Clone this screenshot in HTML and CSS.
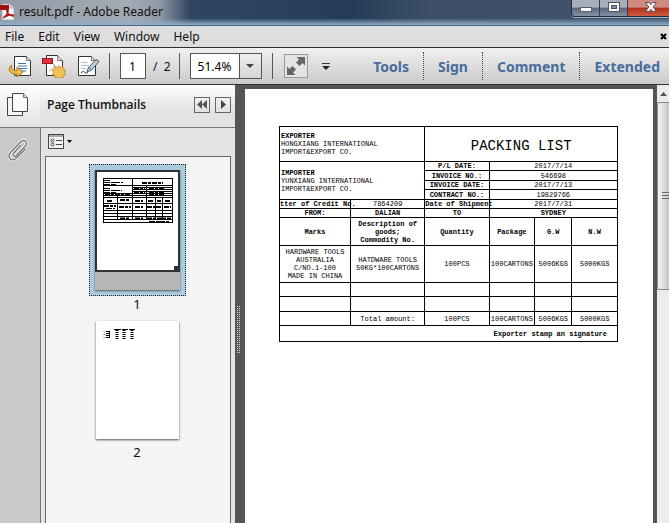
FILE: index.html
```html
<!DOCTYPE html>
<html lang="en">
<head>
<meta charset="utf-8">
<title>result.pdf - Adobe Reader</title>
<link rel="stylesheet" href="styles.css">
</head>
<body>
<div class="app">
  <header class="titlebar">
    <svg class="app-icon" width="16" height="17" viewBox="0 0 16 17"><path d="M2 1h8l4 4v12H2z" fill="#f4f4f4" stroke="#999" stroke-width=".6"/><path d="M10 1v4h4" fill="#ddd" stroke="#999" stroke-width=".6"/><rect y="2" width="9" height="5" fill="#a50f14"/><path d="M3 15c3-2 5-5 5-7s-2-1-1 1 4 4 6 4-1-2-4-1-5 2-6 3z" fill="none" stroke="#b3161b" stroke-width="1.5"/></svg>
    <span class="title">result.pdf - Adobe Reader</span>
    <div class="controls">
      <button class="win" aria-label="Minimize"><svg width="12" height="10" viewBox="0 0 12 10"><rect x=".5" y="5.500" width="11" height="4" fill="#fff" stroke="#555c6b"/></svg></button>
      <button class="win" aria-label="Maximize"><svg width="12" height="10" viewBox="0 0 12 10"><rect x=".5" y=".5" width="11" height="9" fill="#fff" stroke="#4b5364"/><rect x="3.500" y="3.500" width="5" height="3" fill="#8591a8" stroke="#4b5364"/></svg></button>
      <button class="win close" aria-label="Close"><svg width="12" height="10" viewBox="0 0 12 10"><path d="M.5.5h3.700L6 2.600 7.800.5h3.700L8.200 5l3.300 4.500H7.800L6 7.400 4.200 9.500H.5L3.800 5z" fill="#fff" stroke="#5b4650"/></svg></button>
    </div>
  </header>

  <nav class="menubar">
    <button>File</button><button>Edit</button><button>View</button><button>Window</button><button>Help</button>
    <button class="doc-close" aria-label="Close document"><svg width="7" height="7" viewBox="0 0 7 7"><path d="M1 1l5 5M6 1L1 6" stroke="#000" stroke-width="2.200"/></svg></button>
  </nav>

  <div class="toolbar">
    <button class="tool" aria-label="Open"><svg width="24" height="24" viewBox="0 0 24 24"><path d="M6.500 2.500h12l4 4v15h-16z" fill="#fff" stroke="#333"/><path d="M18.500 2.500v4h4" fill="#ddd" stroke="#777"/><path d="M10 9.500h8M10 12h9M10 14.500h9M12 17h6" stroke="#3a78b8"/><path d="M3.500 11C-1 15 1.500 20.500 9 20v3l6-5-6-5v3.500c-4 .5-6-1.500-5.500-5.500z" fill="#f2bd4c" stroke="#a87318"/></svg></button>
    <button class="tool" aria-label="Create PDF"><svg width="24" height="24" viewBox="0 0 24 24"><path d="M4.500 1.500h11l5 5v15h-16z" fill="#fff" stroke="#333"/><path d="M15.500 1.500v5h5" fill="#ddd" stroke="#777"/><path d="M7 17c5-2 6-6 5-7s-1 3 6 5" fill="none" stroke="#aaa"/><rect x=".5" y="4.500" width="10" height="5" fill="#e0343c" stroke="#a4161d"/><path d="M17 11.500l1.500 2 2.500-.8.300 2.600 2.400.9-1.200 2.300 1.200 2.200-2.400.9-.3 2.300-2.500-.6-1.500 1.500-1.500-1.500-2.500.6-.3-2.300-2.400-.9 1.200-2.200-1.200-2.300 2.400-.9.300-2.600 2.500.8z" fill="#f3c054" stroke="#bd8526" stroke-width=".8"/></svg></button>
    <button class="tool" aria-label="Sign document"><svg width="24" height="24" viewBox="0 0 24 24"><path d="M2.500 2.500h13l4 4v15h-17z" fill="#fff" stroke="#333"/><path d="M15.500 2.500v4h4" fill="#ddd" stroke="#777"/><path d="M5 8.500h7M5 11.500h8M5 14.500h5" stroke="#bbb"/><path d="M5 19c4-5 3 3 7-1" fill="none" stroke="#333"/><path d="M11 18l1.500-4.500L20 5.500l3 2-7.500 8.500z" fill="#b7d0e4" stroke="#3f5568"/><path d="M13.500 13.500l2 2" stroke="#3f5568"/></svg></button>
    <span class="rule"></span>
    <input class="page-input" type="text" value="1" aria-label="Page number">
    <span class="page-total">/&nbsp; 2</span>
    <span class="rule"></span>
    <div class="zoom-box">
      <input type="text" value="51.4%" aria-label="Zoom level">
      <button aria-label="Zoom presets"><svg width="8" height="4" viewBox="0 0 8 4"><path d="M0 0h8L4 4z" fill="#444"/></svg></button>
    </div>
    <span class="rule"></span>
    <button class="fit" aria-label="Read mode"><svg width="20" height="20" viewBox="0 0 20 20"><path d="M10.500 1H19v8.500L16.500 7l-3 3L10 6.500l3-3zM9.500 19H1v-8.500L3.500 13l3-3L10 13.500l-3 3z" fill="#666"/></svg></button>
    <button class="more" aria-label="More tools"><svg width="8" height="7" viewBox="0 0 8 7"><path d="M0 .5h8" stroke="#333"/><path d="M0 3h8L4 7z" fill="#222"/></svg></button>
    <div class="panes"><button>Tools</button><button>Sign</button><button>Comment</button><button>Extended</button></div>
  </div>

  <main class="body">
    <aside class="strip">
      <button class="strip-tab active" aria-label="Page thumbnails"><svg width="22" height="24" viewBox="0 0 22 24"><path d="M.5 4.500h15v18H.5z" fill="#f4f4f4" stroke="#444"/><path d="M5.500.5h11l4 4v14h-15z" fill="#fafafa" stroke="#444"/><path d="M16.500.5v4h4" fill="#ddd" stroke="#777"/></svg></button>
      <button class="strip-tab" aria-label="Attachments"><svg width="22" height="24" viewBox="0 0 22 24"><path d="M14 7l-7.500 8.500c-1.500 2 1 4 2.700 2.300L18 8.500C22 4 17 .5 13.500 4L4 14c-5 5.500 1 10.500 6 5.500L18.500 11" fill="none" stroke="#f5f5f5" stroke-width="3"/><path d="M14 7l-7.500 8.500c-1.500 2 1 4 2.700 2.300L18 8.500C22 4 17 .5 13.500 4L4 14c-5 5.500 1 10.500 6 5.500L18.500 11" fill="none" stroke="#777" stroke-width="1.400"/></svg></button>
    </aside>

    <section class="panel">
      <div class="panel-head">
        <h2>Page Thumbnails</h2>
        <button class="mini" aria-label="Collapse"><svg width="10" height="9" viewBox="0 0 10 9"><path d="M5 0v9L0 4.500zM10 0v9L5 4.500z" fill="#555"/></svg></button>
        <button class="mini" aria-label="Expand"><svg width="5" height="9" viewBox="0 0 5 9"><path d="M0 0v9l5-4.500z" fill="#444"/></svg></button>
      </div>
      <div class="panel-body">
        <button class="options" aria-label="Options"><svg width="25" height="16" viewBox="0 0 25 16"><rect x=".5" y=".5" width="15" height="14" fill="#f2f2f2" stroke="#444"/><path d="M1 2h14" stroke="#aaa" stroke-width="2"/><circle cx="4.500" cy="6.500" r="1.500" fill="none" stroke="#444"/><circle cx="4.500" cy="10.500" r="1.500" fill="none" stroke="#444"/><path d="M8 6.500h6M8 10.500h6" stroke="#444"/><path d="M19 6h5l-2.500 3z"/></svg></button>
        <div class="thumbs">
          <figure>
            <div class="select">
              <div class="thumb">
                <svg class="view" width="85" height="102" viewBox="0 0 85 102">
                  <rect x="1" y="1" width="83" height="100" fill="#fff" stroke="#303236" stroke-width="2"/>
                  <g fill="none" stroke="#000">
                    <rect x="8.500" y="8.500" width="69" height="44"/>
                    <path d="M8 15.500h29M37 15.500h41M37 17.500h41M37 19.500h41M37 21.500h41M8 23.500h70M8 25.500h70M8 27.500h70M8 33.500h70M8 40.500h70M8 43.500h70M8 46.500h70M8 49.500h70M37.500 8v42M51.500 16v34M60.500 27v23M67.500 27v23M22.500 23v27"/>
                    <path stroke-width="2" stroke-dasharray="5 1 3 1" d="M47 13h21M39 18.500h11M54 18.500h16M39 22h11M54 22h16M10 24.500h26M54 24.500h16M12 31h5M25 30h10M40 31h8M53 31h6M62 31h4M70 31h5M9 36h12M24 37h12M40 37h8M52 37h8M61 37h6M69 37h7M25 48.500h10M40 48.500h8M52 48.500h24"/>
                    <path stroke-dasharray="6 1 9 1" d="M9 10.500h7M9 12.500h19M9 14.500h12M9 18.500h7M9 20.500h18M9 22.500h12M11 38.500h9M54 51.500h20"/>
                  </g>
                  <path d="M79 96h6v6h-6z" fill="#303236"/>
                </svg>
              </div>
            </div>
            <figcaption>1</figcaption>
          </figure>
          <figure>
            <div class="thumb blank">
              <svg width="34" height="12" viewBox="0 0 34 12"><path d="M0 3.500h4M0 6.500h4M0 9.500h4" stroke="#bbb"/><path d="M3 3.500h4M3 5.500h4M3 7.500h4M3 9.500h4M6.500 3v7M11 1.500h7M19 1.500h6M26 1.500h6" stroke="#000"/><path d="M14 2v9M21 2v9M29 2v9" stroke="#000" stroke-width="3" stroke-dasharray="1 1"/></svg>
            </div>
            <figcaption>2</figcaption>
          </figure>
        </div>
      </div>
    </section>

    <div class="splitter"><span></span></div>

    <section class="document">
      <article class="page">
        <table>
          <colgroup><col class="c1"><col class="c2"><col class="c3"><col class="c4"><col class="c5"><col class="c6"></colgroup>
          <tr class="h35"><td class="left" colspan="2"><b>EXPORTER</b><br>HONGXIANG INTERNATIONAL<br>IMPORT&amp;EXPORT CO.</td><th class="heading" colspan="4">PACKING LIST</th></tr>
          <tr class="h9"><td class="left" colspan="2" rowspan="4"><b>IMPORTER</b><br>YUNXIANG INTERNATIONAL<br>IMPORT&amp;EXPORT CO.</td><th>P/L DATE:</th><td colspan="3">2017/7/14</td></tr>
          <tr class="h10"><th>INVOICE NO.:</th><td colspan="3">546698</td></tr>
          <tr class="h9"><th>INVOICE DATE:</th><td colspan="3">2017/7/13</td></tr>
          <tr class="h10"><th>CONTRACT NO.:</th><td colspan="3">19829766</td></tr>
          <tr class="h9"><th>tter of Credit No.</th><td>7864209</td><th>Date of Shipment</th><td colspan="3">2017/7/31</td></tr>
          <tr class="h9"><th>FROM:</th><th>DALIAN</th><th>TO</th><th colspan="3">SYDNEY</th></tr>
          <tr class="h28"><th>Marks</th><th>Description of<br>goods;<br>Commodity No.</th><th>Quantity</th><th>Package</th><th>G.W</th><th>N.W</th></tr>
          <tr class="h37"><td>HARDWARE TOOLS<br>AUSTRALIA<br>C/NO.1-100<br>MADE IN CHINA</td><td>HATDWARE TOOLS<br>50KG*100CARTONS</td><td>100PCS</td><td>100CARTONS</td><td>5006KGS</td><td>5000KGS</td></tr>
          <tr class="h14"><td></td><td></td><td></td><td></td><td></td><td></td></tr>
          <tr class="h15"><td></td><td></td><td></td><td></td><td></td><td></td></tr>
          <tr class="h14"><td></td><td>Total amount:</td><td>100PCS</td><td>100CARTONS</td><td>5006KGS</td><td>5000KGS</td></tr>
          <tr class="h16"><th class="stamp" colspan="6">Exporter stamp an signature</th></tr>
        </table>
      </article>
      <div class="scroll">
        <button class="up" aria-label="Scroll up"><svg width="7" height="4" viewBox="0 0 7 4"><path d="M0 4h7L3.500 0z" fill="#555"/></svg></button>
        <div class="handle"><svg width="7" height="8" viewBox="0 0 7 8"><path d="M0 .5h7M0 3.500h7M0 6.500h7" stroke="#666"/></svg></div>
      </div>
    </section>
  </main>
</div>
</body>
</html>
```
FILE: styles.css
```css
* { box-sizing: border-box; }
body { margin: 0; font-family: "Noto Sans", "Open Sans", sans-serif; font-size: 12px; color: #111; }
button { border: 0; padding: 0; background: none; font: inherit; color: inherit; }
svg { display: block; flex: none; }
.app { display: flex; flex-direction: column; height: 100vh; overflow: hidden; }

.titlebar { display: flex; align-items: flex-start; height: 26px; flex: none; background: linear-gradient(transparent 70%, #8fadc8 96%, #4d6680 96%), linear-gradient(90deg, #929ba5 0, #a3acb5 130px, #8e98a5 160px, #2f4562 190px, #263c58 350px, #3d4f68 430px, #40536c 100%); }
.app-icon { margin-top: 3px; }
.title { flex: 1; margin-left: 3px; line-height: 24px; }
.controls { display: flex; height: 17px; border: 1px solid #222d3d; border-top: 0; border-right: 0; border-radius: 0 0 0 4px; overflow: hidden; box-shadow: 0 1px 0 #9fb0c4; }
.win { display: flex; justify-content: center; align-items: center; width: 28px; padding-bottom: 3px; border-right: 1px solid #333e4f; background: linear-gradient(#a8aeb9 45%, #5a6679 50%, #8592a5); }
.win.close { width: 41px; padding-left: 5px; border: 0; background: linear-gradient(#cf8b80 45%, #b5301b 50%, #cc5c42); }

.menubar { display: flex; align-items: center; height: 22px; flex: none; padding: 0 2px 0 5px; gap: 14px; background: #dedede; border-bottom: 1px solid #2e2e2e; }
.doc-close { margin-left: auto; }

.toolbar { display: flex; align-items: center; height: 37px; flex: none; padding: 0 9px 0 8px; background: linear-gradient(#f0f0f0, #cbcbcb); border-bottom: 1px solid #333; }
.tool { margin-right: 10px; }
.tool + .rule { margin-left: -1px; }
.rule { width: 1px; height: 26px; background: #555; }
.page-input { width: 26px; height: 26px; margin-left: 10px; padding: 0 0 0 8px; border: 1px solid #555; background: #fff; font: inherit; }
.page-total { margin: 0 8px 0 7px; }
.zoom-box { display: flex; height: 26px; margin: 0 10px; border: 1px solid #555; }
.zoom-box input { width: 48px; padding: 0 0 0 7px; border: 0; background: #fff; font: inherit; }
.zoom-box button { display: flex; align-items: center; justify-content: center; width: 22px; border-left: 1px solid #555; background: linear-gradient(#f0f0f0, #d4d4d4); }
.fit { display: flex; align-items: center; justify-content: center; width: 24px; height: 24px; margin-left: 11px; border: 1px solid #999; background: #e4e4e4; }
.more { margin-left: 14px; }
.panes { display: flex; margin-left: auto; color: #486c9c; font-size: 14px; font-weight: 700; }
.panes button { height: 28px; padding: 0 14px; border-right: 1px dotted #444; }
.panes button:last-child { padding-right: 0; border: 0; }

.body { display: flex; flex: 1; min-height: 0; }
.strip { width: 40px; flex: none; background: #c9c9c9; }
.strip-tab { display: flex; width: 100%; height: 43px; align-items: center; justify-content: center; padding-right: 5px; }
.strip-tab.active { padding-bottom: 3px; border-bottom: 1px solid #777; background: linear-gradient(#fff, #e3e3e3); }
.panel { display: flex; flex-direction: column; width: 195px; flex: none; background: #e4e4e4; }
.panel-head { display: flex; align-items: center; height: 43px; flex: none; padding: 0 4px 3px 7px; gap: 5px; border-bottom: 1px solid #777; background: linear-gradient(#fff, #e3e3e3 60%); }
.panel-head h2 { flex: 1; margin: 0; font: 600 12px "Open Sans", sans-serif; white-space: nowrap; }
.mini { display: flex; align-items: center; justify-content: center; width: 16px; height: 16px; border: 1px solid #666; }
.panel-body { display: flex; flex-direction: column; flex: 1; min-height: 0; padding: 6px 4px 0 4px; border-left: 1px solid #777; }
.options { align-self: flex-start; margin-left: 3px; }
.thumbs { flex: 1; margin-top: 6px; padding: 7px 2px 0 0; border: 1px solid #666; border-bottom: 0; background: #f4f4f4; overflow: hidden; }
figure { display: flex; flex-direction: column; align-items: center; margin: 0; }
figcaption { line-height: 18px; margin: -1px 0 8px; font-size: 13px; }
.select { padding: 5px; border: 1px dotted #222; background: #abcde0; }
.thumb { width: 85px; height: 120px; background: #b6b6b6; box-shadow: 0 1px 2px #555; }
.thumb.blank { height: 118px; width: 83px; padding: 7px; background: #fff; margin-bottom: 5px; }
.splitter { display: flex; align-items: center; width: 10px; flex: none; padding-left: 2px; background: #555; }
.splitter span { width: 4px; height: 48px; margin-top: 49px; background: repeating-linear-gradient(#555 0 1px, transparent 1px 2px), repeating-linear-gradient(90deg, #ddd 0 1px, #555 1px 2px); }

.document { display: flex; flex: 1; min-width: 0; padding-top: 4px; background: #555; }
.page { flex: 1; min-width: 0; padding: 37px 35px 0 34px; background: #fff; }
.scroll { width: 12px; flex: none; margin: -4px 0 0 4px; background: #ececec; }
.up { display: flex; align-items: center; justify-content: center; width: 100%; height: 17px; }
.handle { display: flex; align-items: center; justify-content: flex-end; height: 188px; border: 1px solid #888; border-right: 0; border-radius: 2px 0 0 2px; background: linear-gradient(90deg, #f5f5f5, #c6c6c6); }

table { width: 100%; table-layout: fixed; border-collapse: collapse; font: 7px/8px "Liberation Mono", monospace; color: #000; }
td, th { padding: 0; border: 1px solid #000; text-align: center; white-space: nowrap; line-height: 8px; }
.left { padding-left: 1px; text-align: left; }
th.heading { font-size: 14px; font-weight: 400; line-height: 16px; padding-top: 4px; }
th.stamp { padding-right: 10px; text-align: right; }
.c1 { width: 21%; } .c2 { width: 22%; } .c3 { width: 19%; } .c4 { width: 13.5%; } .c5 { width: 11%; } .c6 { width: 13.5%; }
.h9 { height: 9px; } .h10 { height: 10px; } .h14 { height: 14px; } .h15 { height: 15px; } .h16 { height: 16px; }
.h28 { height: 28px; } .h35 { height: 35px; } .h37 { height: 37px; }
```
